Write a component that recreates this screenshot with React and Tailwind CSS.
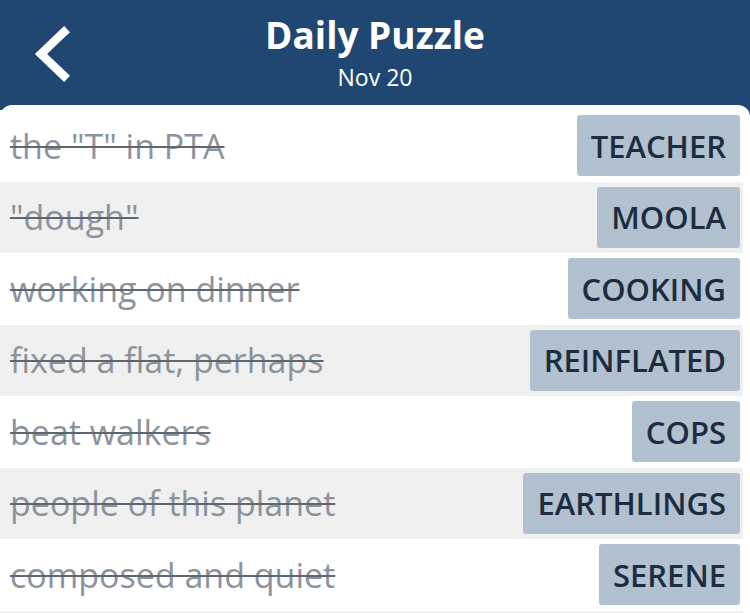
const clues = [
  { clue: 'the "T" in PTA', answer: 'TEACHER' },
  { clue: '"dough"', answer: 'MOOLA' },
  { clue: 'working on dinner', answer: 'COOKING' },
  { clue: 'fixed a flat, perhaps', answer: 'REINFLATED' },
  { clue: 'beat walkers', answer: 'COPS' },
  { clue: 'people of this planet', answer: 'EARTHLINGS' },
  { clue: 'composed and quiet', answer: 'SERENE' },
];

function ClueRow({ clue, answer, shaded }) {
  return (
    <div className={'flex items-center justify-between h-[71.5px] pl-[10px] pr-[3px] ' + (shaded ? 'bg-[#f0f0f0]' : 'bg-white')}>
      <span className="text-[34px] leading-[40px] text-[#8d939c] line-through decoration-[#5e6670] decoration-2 whitespace-nowrap">
        {clue}
      </span>
      <span className="h-[61px] flex items-center px-[14px] rounded-[3px] bg-[#b1c1cf] text-[#1d2c3f] text-[31px] font-semibold">
        {answer}
      </span>
    </div>
  );
}

export default function App() {
  return (
    <div className="w-[750px] h-[613px] overflow-hidden bg-[#204672] font-['Open_Sans',sans-serif]">
      <div className="relative h-[105px] flex flex-col items-center pt-[10px] text-white">
        <button className="absolute left-[34px] top-[26px] w-[40px] h-[56px] flex items-center justify-center">
          <svg width="40" height="56" viewBox="0 0 40 56" fill="none">
            <polyline points="30,6 7,28 30,50" stroke="white" strokeWidth="8.5" strokeLinecap="square" />
          </svg>
        </button>
        <h1 className="text-[37px] font-bold leading-[50px]">Daily Puzzle</h1>
        <div className="text-[23px] leading-[30px] mt-[2px]">Nov 20</div>
      </div>
      <div className="bg-white rounded-t-[12px] pt-[5px] pr-[7px]">
        {clues.map((c, i) => (
          <ClueRow key={i} clue={c.clue} answer={c.answer} shaded={i % 2 === 1} />
        ))}
        <div className="h-[20px] bg-[#f0f0f0]" />
      </div>
    </div>
  );
}
